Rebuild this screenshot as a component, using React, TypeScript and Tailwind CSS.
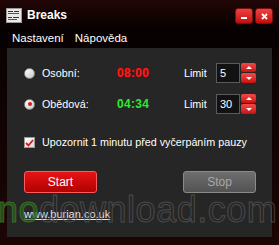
import React from "react";

const font = "font-['Liberation_Sans',Arial,sans-serif]";

const Radio = ({ checked }: { checked?: boolean }) => (
  <span className="flex h-[11px] w-[11px] items-center justify-center rounded-full border border-[#8a8a8a] bg-gradient-to-br from-white to-[#c8c8c8]">
    {checked && <span className="h-[4px] w-[4px] rounded-full bg-[#e01818]" />}
  </span>
);

const Spin = () => (
  <div className="ml-[1px] flex w-[15px] flex-col gap-[1px]">
    <div className="flex h-[9px] items-center justify-center rounded-[2px] bg-gradient-to-b from-[#f24848] to-[#c80c0c]">
      <svg width="6" height="3" viewBox="0 0 6 3">
        <path d="M0 3L3 0L6 3Z" fill="#fff" />
      </svg>
    </div>
    <div className="flex h-[10px] items-center justify-center rounded-[2px] bg-gradient-to-b from-[#f24848] to-[#c80c0c]">
      <svg width="6" height="3" viewBox="0 0 6 3">
        <path d="M0 0L3 3L6 0Z" fill="#fff" />
      </svg>
    </div>
  </div>
);

const Row = ({
  label,
  time,
  timeColor,
  limit,
  checked,
}: {
  label: string;
  time: string;
  timeColor: string;
  limit: string;
  checked?: boolean;
}) => (
  <div className="flex h-[20px] items-center pl-[17px]">
    <Radio checked={checked} />
    <span className="ml-[7px] w-[75px] text-[10.75px] text-white">{label}</span>
    <span className={`w-[67px] text-[12px] font-bold tracking-[0.3px] ${timeColor}`}>{time}</span>
    <span className="w-[32px] text-[10.75px] text-white">Limit</span>
    <div className="flex h-[20px] w-[24px] items-center border border-[#5a5a5a] bg-[#121212] pl-[3px] text-[11px] text-white">
      {limit}
    </div>
    <Spin />
  </div>
);

export default function App() {
  return (
    <div className={`relative flex h-[245px] w-[279px] flex-col overflow-hidden bg-black ${font}`}>
      {/* title bar */}
      <div className="flex h-[30px] items-start bg-gradient-to-b from-[#220707] to-[#070101] px-[6px] pt-[8px]">
        <svg width="16" height="15" viewBox="0 0 16 15">
          <rect x="0.5" y="0.5" width="15" height="14" fill="#e8e8e8" stroke="#9a9a9a" />
          <rect x="2" y="3" width="5" height="1" fill="#333" />
          <rect x="8" y="3" width="5" height="1" fill="#333" />
          <rect x="2" y="5" width="11" height="1" fill="#555" />
          <rect x="2" y="9" width="4" height="1" fill="#333" />
          <rect x="7" y="9" width="6" height="1" fill="#333" />
          <rect x="2" y="11" width="9" height="1" fill="#555" />
        </svg>
        <span className="ml-[5px] text-[12px] font-bold leading-[15px] text-white">Breaks</span>
        <div className="ml-auto flex gap-[2px]">
          <div className="flex h-[16px] w-[18px] items-end justify-center rounded-[3px] border border-[#7a1010] bg-gradient-to-b from-[#f04040] to-[#c00a0a] pb-[4px]">
            <span className="h-[2px] w-[6px] bg-white" />
          </div>
          <div className="flex h-[16px] w-[18px] items-center justify-center rounded-[3px] border border-[#7a1010] bg-gradient-to-b from-[#f04040] to-[#c00a0a]">
            <svg width="7" height="7" viewBox="0 0 7 7">
              <path d="M1 1L6 6M6 1L1 6" stroke="#fff" strokeWidth="1.8" />
            </svg>
          </div>
        </div>
      </div>

      {/* menu */}
      <div className="flex h-[18px] items-center gap-[11px] bg-[#070101] pl-[12px] text-[11.5px] text-white">
        <span>Nastavení</span>
        <span>Nápověda</span>
      </div>

      {/* body */}
      <div className="flex flex-1 bg-gradient-to-b from-[#0a0202] to-[#1c0505] pb-[8px] pl-[7px] pr-[7px]">
        <div className="flex flex-1 flex-col bg-[#262626] pt-[15px]">
          <Row label="Osobní:" time="08:00" timeColor="text-[#ff1c1c] [text-shadow:0_0_2px_#900]" limit="5" />
          <div className="h-[11px]" />
          <Row label="Obědová:" time="04:34" timeColor="text-[#2ee82e]" limit="30" checked />

          <div className="mt-[23px] flex h-[11px] items-center pl-[17px]">
            <span className="flex h-[11px] w-[11px] items-center justify-center border border-[#9a9a9a] bg-gradient-to-br from-white to-[#d8d8d8]">
              <svg width="9" height="8" viewBox="0 0 9 8">
                <path d="M1 4L3.5 6.5L8 1" fill="none" stroke="#d41a1a" strokeWidth="1.8" />
              </svg>
            </span>
            <span className="ml-[7px] text-[10.75px] text-white">Upozornit 1 minutu před vyčerpáním pauzy</span>
          </div>

          <div className="mt-[23px] flex h-[22px] pl-[17px]">
            <button className="flex w-[73px] items-center justify-center rounded-[3px] border border-[#ff5a5a] bg-gradient-to-b from-[#e81414] to-[#b00202] text-[12px] text-white">
              Start
            </button>
            <button className="ml-[86px] flex w-[73px] items-center justify-center rounded-[3px] border border-[#8a8a8a] bg-gradient-to-b from-[#6e6e6e] to-[#535353] text-[12px] text-[#a8a8a8]">
              Stop
            </button>
          </div>

          <a className="ml-[17px] mt-[15px] w-fit text-[11px] leading-[13px] text-[#e8e8e8] underline">
            www.burian.co.uk
          </a>
        </div>
      </div>

      {/* watermark */}
      <div className="pointer-events-none absolute left-[-2px] top-[192px] whitespace-nowrap text-[36px] leading-none tracking-[0.5px]">
        <span className="text-[#2b5a1c] opacity-80 [-webkit-text-stroke:1px_#3f7f2a]">no</span>
        <span className="text-transparent opacity-70 [-webkit-text-stroke:1px_#5a5a5a]">download.com</span>
      </div>
    </div>
  );
}
